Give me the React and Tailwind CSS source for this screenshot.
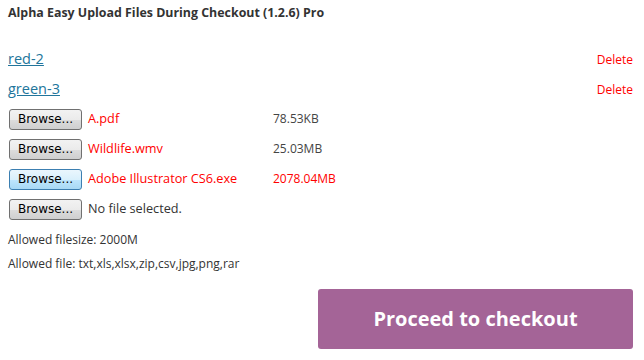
import React from "react";

const F = { fontFamily: '"Open Sans", "Liberation Sans", sans-serif' };

function BrowseBtn({ focused }) {
  return (
    <div
      className={
        "w-[73px] h-[21px] shrink-0 rounded-[3px] border flex items-center justify-center text-[12px] text-black " +
        (focused
          ? "border-[#3c7fb1] bg-[linear-gradient(#eaf6fd_0%,#d9f0fc_50%,#bee6fd_51%,#a7d9f5_100%)]"
          : "border-[#707070] bg-[linear-gradient(#f2f2f2_0%,#ebebeb_50%,#dddddd_51%,#cfcfcf_100%)]")
      }
      style={{ fontFamily: '"DejaVu Sans", Tahoma, sans-serif' }}
    >
      Browse...
    </div>
  );
}

function FileRow({ name, size, red, focused, empty }) {
  return (
    <div className="h-[30px] flex items-center">
      <BrowseBtn focused={focused} />
      <div
        className={
          "ml-[6px] w-[185px] text-[12.7px] " + (empty ? "text-[#333]" : "text-[#ff0000]")
        }
      >
        {name}
      </div>
      {size && (
        <div className={"text-[12px] " + (red ? "text-[#ff0000]" : "text-[#444]")}>{size}</div>
      )}
    </div>
  );
}

export default function App() {
  return (
    <div className="w-[644px] h-[360px] bg-white pl-[8px] pr-[11px] pt-[5px]" style={F}>
      <div className="text-[12.4px] leading-[16px] font-bold text-[#333]">
        Alpha Easy Upload Files During Checkout (1.2.6) Pro
      </div>
      <div className="mt-[23px]">
        <div className="h-[30px] flex items-baseline justify-between leading-[30px]">
          <a className="text-[14.5px] text-[#21759b] underline">red-2</a>
          <span className="text-[12px] text-[#ff0000]">Delete</span>
        </div>
        <div className="h-[30px] flex items-baseline justify-between leading-[30px]">
          <a className="text-[14.5px] text-[#21759b] underline">green-3</a>
          <span className="text-[12px] text-[#ff0000]">Delete</span>
        </div>
        <div className="pl-[1px]">
          <FileRow name="A.pdf" size="78.53KB" />
          <FileRow name="Wildlife.wmv" size="25.03MB" />
          <FileRow name="Adobe Illustrator CS6.exe" size="2078.04MB" red focused />
          <FileRow name="No file selected." empty />
        </div>
      </div>
      <div className="mt-[4px] text-[12px] leading-[24px] text-[#333]">
        <div>Allowed filesize: 2000M</div>
        <div>Allowed file: txt,xls,xlsx,zip,csv,jpg,png,rar</div>
      </div>
      <div className="mt-[13px] flex justify-end">
        <div className="w-[315px] h-[60px] rounded-[3px] bg-[#a46497] flex items-center justify-center text-white text-[20px] font-bold">
          Proceed to checkout
        </div>
      </div>
    </div>
  );
}
